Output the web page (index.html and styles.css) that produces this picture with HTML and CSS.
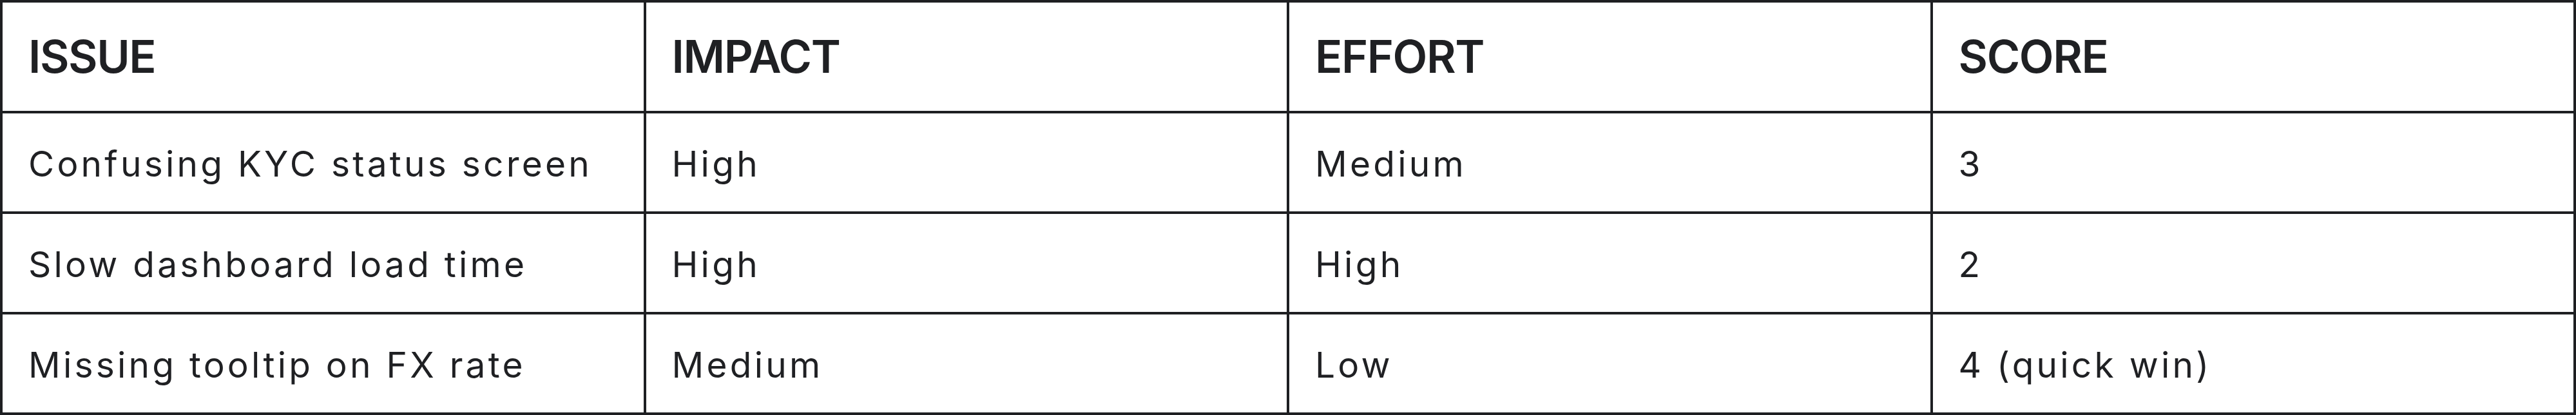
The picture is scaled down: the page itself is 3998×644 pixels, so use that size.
FILE: index.html
```html
<!DOCTYPE html>
<html lang="en">
<head>
<meta charset="utf-8">
<title>Issue prioritisation</title>
<link rel="stylesheet" href="styles.css">
</head>
<body>
<table class="matrix">
  <thead>
    <tr class="head-row">
      <th class="cell head">ISSUE</th>
      <th class="cell head">IMPACT</th>
      <th class="cell head">EFFORT</th>
      <th class="cell head">SCORE</th>
    </tr>
  </thead>
  <tbody>
    <tr class="body-row">
      <td class="cell">Confusing KYC status screen</td>
      <td class="cell">High</td>
      <td class="cell">Medium</td>
      <td class="cell">3</td>
    </tr>
    <tr class="body-row">
      <td class="cell">Slow dashboard load time</td>
      <td class="cell">High</td>
      <td class="cell">High</td>
      <td class="cell">2</td>
    </tr>
    <tr class="body-row">
      <td class="cell">Missing tooltip on FX rate</td>
      <td class="cell">Medium</td>
      <td class="cell">Low</td>
      <td class="cell">4 (quick win)</td>
    </tr>
  </tbody>
</table>
</body>
</html>
```
FILE: styles.css
```css
html, body {
  margin: 0;
  padding: 0;
  background: #ffffff;
}
body {
  font-family: Inter, "Liberation Sans", sans-serif;
  color: #1f2023;
}
.matrix {
  width: 3998px;
  border-collapse: collapse;
  table-layout: fixed;
  border: 4px solid #1e1f22;
}
.cell {
  border: 4px solid #1e1f22;
  padding: 0 0 0 40px;
  text-align: left;
  vertical-align: middle;
  white-space: nowrap;
}
.head-row .cell {
  height: 168px;
  font-size: 70px;
  font-weight: 600;
  letter-spacing: -0.02em;
  line-height: 1;
}
.body-row .cell {
  height: 148px;
  padding-top: 4px;
  font-size: 55px;
  font-weight: 400;
  letter-spacing: 0.077em;
  line-height: 1;
}
```
